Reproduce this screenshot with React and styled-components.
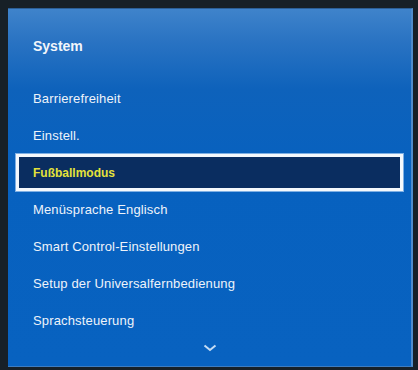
import styled, { createGlobalStyle } from "styled-components";

const Global = createGlobalStyle`
  html, body {
    margin: 0;
    padding: 0;
    background: #172027;
  }
  body {
    font-family: "Liberation Sans", Arial, sans-serif;
  }
`;

const Screen = styled.div`
  width: 418px;
  height: 370px;
  padding: 8px 5px 3px 8px;
  box-sizing: border-box;
  background: #172027;
`;

const Panel = styled.div`
  height: 100%;
  box-sizing: border-box;
  display: flex;
  flex-direction: column;
  background: linear-gradient(180deg, #3f83cb 0px, #2b74c3 30px, #0e62bb 80px, #0761bf 160px, #0862c0 100%);
  border-right: 2px solid #4f8ccb;
  border-bottom: 1px solid #3d7cc0;
  border-top: 1px solid #2c5f96;
`;

const Title = styled.h2`
  margin: 0;
  padding: 27px 0 0 25px;
  height: 71px;
  box-sizing: border-box;
  line-height: 20px;
  font-size: 14px;
  font-weight: bold;
  color: #f2f6fb;
`;

const List = styled.ul`
  list-style: none;
  margin: 0;
  padding: 0 8px;
  display: flex;
  flex-direction: column;
`;

const Item = styled.li`
  height: 37px;
  box-sizing: border-box;
  display: flex;
  align-items: center;
  padding-left: ${(p) => (p.$active ? "14px" : "17px")};
  font-size: ${(p) => (p.$active ? "12px" : "13px")};
  font-weight: ${(p) => (p.$active ? "bold" : "normal")};
  letter-spacing: ${(p) => (p.$active ? "0" : "0.15px")};
  color: ${(p) => (p.$active ? "#e4e23a" : "#eef3fa")};
  background: ${(p) => (p.$active ? "#0a2d60" : "transparent")};
  border: ${(p) => (p.$active ? "3px solid #f4f8fc" : "none")};
  box-shadow: ${(p) => (p.$active ? "0 0 0 1px #7fb0e4" : "none")};
  white-space: nowrap;
`;

const More = styled.div`
  display: flex;
  justify-content: center;
  padding-top: 5px;
`;

const items = [
  "Barrierefreiheit",
  "Einstell.",
  "Fußballmodus",
  "Menüsprache Englisch",
  "Smart Control-Einstellungen",
  "Setup der Universalfernbedienung",
  "Sprachsteuerung",
];

export default function App() {
  return (
    <>
      <Global />
      <Screen>
        <Panel>
          <Title>System</Title>
          <List>
            {items.map((t, i) => (
              <Item key={t} $active={i === 2}>
                {t}
              </Item>
            ))}
          </List>
          <More>
            <svg width="14" height="8" viewBox="0 0 14 8">
              <polyline points="1.5,1.5 7,6 12.5,1.5" fill="none" stroke="#c4dcf4" strokeWidth="2" />
            </svg>
          </More>
        </Panel>
      </Screen>
    </>
  );
}
